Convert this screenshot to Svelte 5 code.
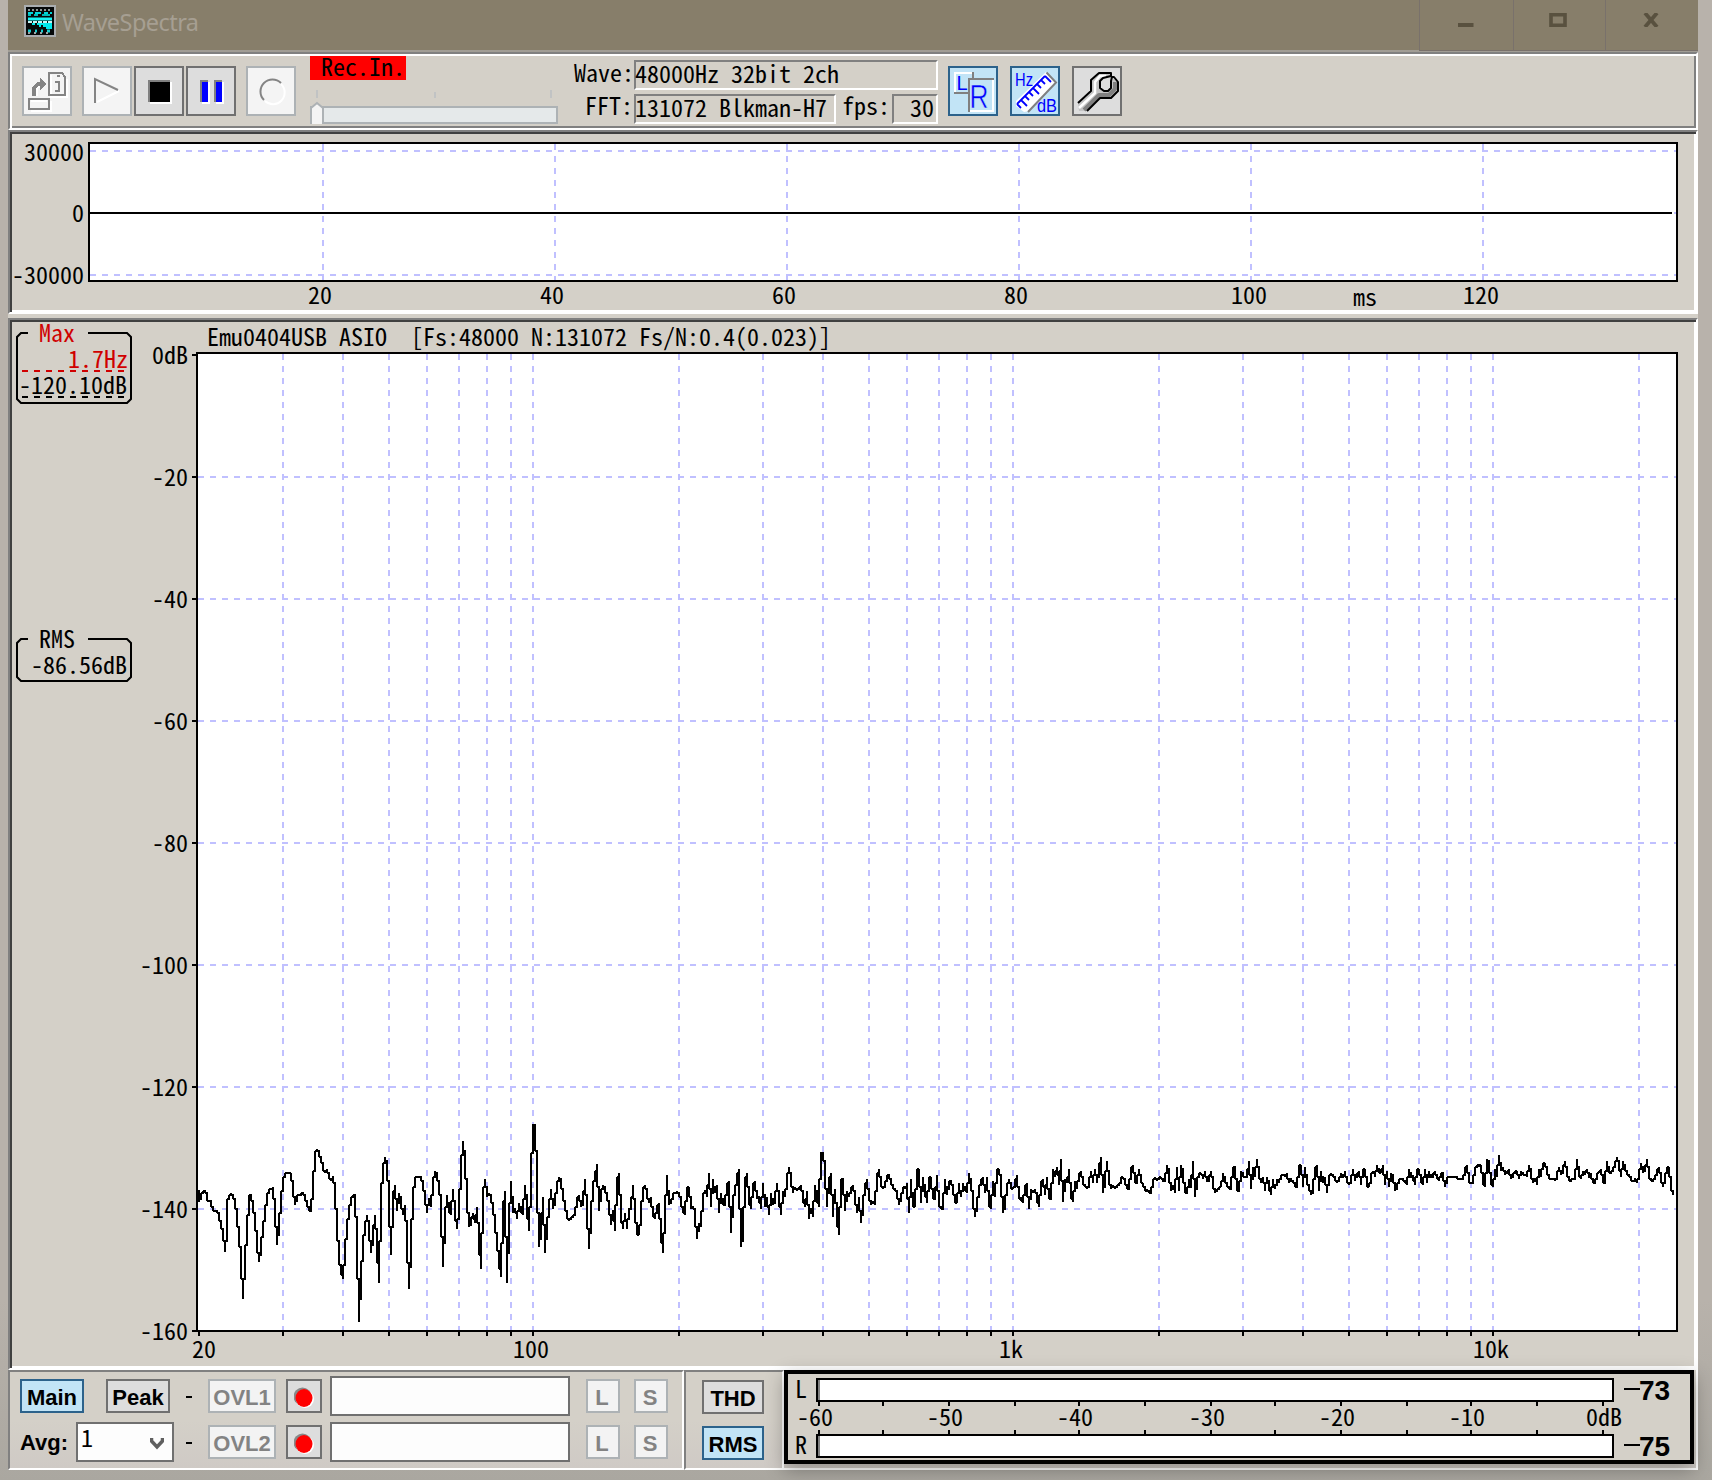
<script>
  const waveMs = [20, 40, 60, 80, 100, 120].map((ms, i) => ({ ms, x: 323 + 232 * i }));

  const decades = [283, 343, 389, 427, 459, 487, 511, 533, 679, 763, 823, 869, 907, 939, 967, 991,
    1013, 1159, 1243, 1303, 1349, 1387, 1419, 1447, 1471, 1493, 1639];
  const levels = ['0dB', '-20', '-40', '-60', '-80', '-100', '-120', '-140', '-160']
    .map((text, i) => ({ text, y: 355 + 122 * i }));
  const freqs = [{ t: '20', x: 192 }, { t: '100', x: 513 }, { t: '1k', x: 999 }, { t: '10k', x: 1473 }];

  // Spectrum trace, in thirds of a pixel; each part has its own horizontal origin.
  const trace = [
    { x: 180, pts: '56,240 56,275 62,258 68,243 76,243 83,257 90,285 98,297 108,303 116,320 122,345 128,372 132,408 135,425 138,355 142,280 148,258 154,248 160,262 166,268 172,320 178,380 184,440 189,568 195,440 201,375 207,256 214,256 220,290 226,330 232,400 237,455 243,410 249,355 255,310 261,262 267,238 279,232 285,300 291,405 297,350 303,265 309,215 315,192 321,188 333,188 339,235 345,285 352,265 360,250 368,250 375,265 381,275 387,302 393,302 399,230 405,135 411,116 417,133 423,145 429,175 435,188 441,178 447,195 453,213 459,197 465,240 471,350 477,440 483,485 489,508 495,420 501,350 507,300 513,265 519,256 525,256 531,380 537,635 543,500 549,410 555,345 561,315 567,350 573,430 579,380 585,315 591,400 597,520 603,260 609,180 615,140 621,160 627,260 633,436 639,260 645,225 651,303 657,250 663,275 669,315 675,285 681,380 687,538 693,400 699,250 705,207 717,200 724,202 730,225 736,265 741,310 747,265 753,290 759,220 765,182 771,195 777,225 783,290 789,472 795,330 801,255 807,300 811,315 819,236 825,310 831,358 837,290 843,180 849,92 855,150 861,265 867,350 873,335 879,310 885,340 891,290 897,390 903,478 909,260 915,207 921,260 927,250 933,265 939,290 945,345 951,395 957,450 963,502 969,300 975,242 981,520 987,340 993,212 999,310 1005,295 1011,328 1017,278 1023,300 1029,315 1035,224 1041,290 1047,364 1053,220 1059,43 1065,43 1071,200 1077,412 1083,360 1089,260 1095,430 1101,340 1107,300 1113,236 1119,298 1125,270 1131,230 1137,200' },
    { x: 550, pts: '27,200 33,213 39,255 45,295 51,315 57,333 63,322 69,315 75,315 81,268 87,256 93,290 99,285 105,206 111,300 117,418 123,320 129,230 135,200 141,163 147,303 153,245 159,225 165,238 171,255 177,290 183,345 189,300 195,364 201,210 207,188 213,320 219,358 225,310 231,358 237,295 243,300 249,225 255,310 261,370 267,376 273,310 279,240 285,225 291,250 297,280 303,262 309,320 315,327 321,293 327,280 333,370 339,430 345,310 351,194 357,286 363,270 370,258 380,243 388,250 393,270 399,308 405,315 411,230 417,230 423,297 429,288 435,310 441,388 447,340 453,350 459,260 465,240 471,262 477,188 483,290 489,207 495,250 501,225 507,310 513,248 519,285 525,285 531,230 537,212 543,370 549,270 555,245 561,200 567,176 573,412 579,370 585,212 591,188 597,272 603,298 609,225 615,213 621,268 627,258 633,298 639,220 645,290 651,262 657,316 663,248 669,285 675,272 681,218 687,265 693,316 699,243 705,262 711,210 717,170 723,210 729,248 735,230 741,243 747,232 753,225 759,262 765,292 771,243 777,328 783,295 789,322 795,225 801,262 807,292 813,127 819,127 825,180 831,290 837,210 843,188 849,322 855,236 861,320 867,376 873,207 879,207 885,303 891,243 897,262 903,240 909,225 915,255 921,310 927,262 933,340 939,290 945,225 951,207 957,265 963,285 969,272 975,285 981,205 987,176 993,225 999,237 1005,230 1011,195 1017,200 1023,215 1029,235 1035,240 1041,250 1047,285 1053,262 1059,230 1065,236 1071,220 1077,310 1083,207 1089,290 1095,292 1101,180 1107,176 1113,280 1119,200 1125,245 1131,280 1137,207' },
    { x: 920, pts: '27,207 33,200 39,268 45,262 51,195 57,285 63,298 69,290 75,207 81,255 87,215 93,213 99,240 105,275 111,280 117,218 123,262 129,220 135,243 141,248 147,188 153,220 159,270 165,322 171,280 177,240 183,210 189,200 195,250 201,200 207,285 213,298 219,213 225,262 231,176 237,176 243,215 249,310 255,280 261,225 267,208 273,232 279,238 285,220 291,195 297,268 303,262 309,280 315,225 321,220 327,298 333,237 339,250 345,237 351,262 357,292 363,213 369,207 375,255 381,200 387,268 393,260 399,176 405,200 411,170 417,225 423,146 429,275 435,207 441,220 447,176 453,262 459,275 465,213 471,238 477,190 483,182 489,225 495,230 501,237 507,220 513,182 519,218 525,176 531,218 537,180 543,140 549,250 555,215 561,152 567,210 573,237 579,225 585,237 591,228 597,225 603,207 609,200 615,213 621,232 627,237 633,180 639,164 645,218 651,218 657,176 663,215 669,218 675,243 681,237 687,249 693,243 699,215 705,202 711,212 717,207 723,200 729,215 735,213 741,164 747,190 753,243 759,225 765,249 771,170 777,243 783,164 789,195 795,243 801,249 807,207 813,235 819,152 825,262 831,210 837,190 843,188 849,207 855,182 861,215 867,213 873,182 879,225 885,249 891,237 897,232 903,232 909,188 915,212 921,225 927,238 933,237 939,170 945,176 951,243 957,238 963,182 969,200 975,200 981,198 987,152 993,238 999,170 1005,200 1011,146 1017,195 1023,220 1029,200 1035,243 1041,200 1047,225 1053,256 1059,207 1065,237 1071,207 1077,218 1083,195 1095,200 1101,188 1107,220 1113,205 1119,215 1125,228 1131,230 1137,170 1143,164 1149,230 1155,170 1161,220 1167,235 1173,256 1179,237 1185,180 1191,164' },
    { x: 1310, pts: '21,164 27,243 33,182 39,218 45,200 51,249 57,205 63,188 69,202 75,202 81,218 87,207 93,190 99,205 105,182 111,215 117,225 123,210 129,176 135,212 141,190 147,182 153,225 159,182 165,176 171,225 177,232 183,200 189,182 195,200 201,164 207,185 213,190 219,164 225,225 231,182 237,232 243,188 249,200 255,243 261,232 267,207 279,207 285,218 291,225 297,176 303,205 309,195 315,225 321,182 327,176 333,218 339,225 345,176 351,218 357,182 363,205 369,200 375,182 381,205 387,213 393,190 399,190 405,232 411,200 420,200 440,202 446,207 458,202 465,182 471,164 477,215 489,218 495,176 501,165 507,170 513,164 519,215 525,232 531,146 537,165 543,215 549,232 555,176 561,200 567,134 573,182 579,170 585,195 591,188 597,178 603,207 609,190 615,182 621,182 627,207 633,182 639,190 645,195 651,200 657,164 663,190 669,218 675,205 681,225 687,176 693,200 699,158 705,158 711,182 717,205 729,205 735,213 741,195 747,170 753,195 759,182 765,152 771,185 777,213 783,207 795,207 801,146 807,195 813,207 819,182 825,195 831,176 837,205 843,190 849,218 855,218 861,190 867,190 873,176 879,218 885,218 891,152 897,190 903,182 909,180 915,165 921,140 927,170 933,200 939,152 945,175 951,185 957,200 963,207 969,215 975,205 981,218 987,195 993,158 999,188 1005,182 1011,146 1017,200 1023,213 1029,207 1035,205 1041,185 1047,170 1053,207 1059,232 1065,205 1071,176 1077,170 1083,235 1089,256' }
  ];

  const snap = (v) => 2 * Math.floor(v / 2) + 1;
  // Joins neighbouring columns half-way up, as an unsmoothed line does.
  function stepPath(part) {
    const pts = part.pts.split(' ').map((p) => {
      const [x, y] = p.split(',').map(Number);
      return [snap(part.x + x / 3), 1110 + y / 3];
    });
    let d = `M${pts[0][0]} ${pts[0][1].toFixed(1)}`;
    for (let i = 1; i < pts.length; i++) {
      const [x, y] = pts[i];
      d += `V${snap((pts[i - 1][1] + y) / 2)}H${x}V${y.toFixed(1)}`;
    }
    return d;
  }

  const meterTicks = [819, 883, 949, 1015, 1079, 1145, 1211, 1275, 1341, 1407, 1471, 1537, 1603];
  const meterLabels = [['-60', 797], ['-50', 927], ['-40', 1057], ['-30', 1189], ['-20', 1319], ['-10', 1449], ['0dB', 1586]];
  const overlays = [{ name: 'OVL1' }, { name: 'OVL2' }];
</script>

<div class="desktop">
  <div class="window">
    <header class="title">
      <svg class="appicon" viewBox="0 0 32 32" width="32" height="32">
        <rect width="32" height="32" fill="#a9adb0" />
        <rect x="2" y="2" width="28" height="28" fill="#06090a" />
        <path d="M4 5h24" stroke="#8a9696" stroke-width="2" stroke-dasharray="2 2" />
        <path d="M4 8h5m2 0h6m3 0h4m2 0h2" stroke="#00d8dc" stroke-width="2" />
        <path d="M4 10h3m3 0h4m4 0h8" stroke="#0bb" stroke-width="2" />
        <path d="M4 14h24" stroke="#19f2f4" stroke-width="3" />
        <path d="M4 17h24" stroke="#c9f4f4" stroke-width="2" stroke-dasharray="4 1" />
        <path d="M8 19h3m2 0h15" stroke="#00e8ec" stroke-width="2" />
        <path d="M15 21h2m2 0h9M22 23h6" stroke="#00e8ec" stroke-width="2" />
        <path d="M4 26h3m4 0h2m4 0h2m4 0h3" stroke="#16cdd0" stroke-width="3" />
        <path d="M4 28h24" stroke="#98a6a6" stroke-width="2" stroke-dasharray="2 4" />
      </svg>
      <span class="caption">WaveSpectra</span>
      <div class="winbtn first"><svg viewBox="0 0 16 14" width="16" height="14"><rect y="10" width="15.5" height="4" fill="#59513f" /></svg></div>
      <div class="winbtn mid"><svg viewBox="0 0 18 14" width="18" height="14"><rect x="2" y="1.7" width="14" height="10.6" fill="none" stroke="#59513f" stroke-width="3.6" /></svg></div>
      <div class="winbtn last"><svg viewBox="0 0 16 14" width="16" height="14"><path d="M2 0L14 14M14 0L2 14" stroke="#59513f" stroke-width="3.8" /></svg></div>
    </header>

    <section class="toolbar">
      <button class="tool off" aria-label="Open">
        <svg viewBox="22 66 50 50" width="50" height="50" fill="none" stroke-width="2" shape-rendering="crispEdges">
          <path d="M51 75V97H67V79M31 101H47M31 111H51V101M37 96V88L43 84" stroke="#fff" />
          <path d="M49 73H62L65 77V95H49ZM29 99H49V109H29Z" stroke="#848484" />
          <path d="M34 96V88L38 84H42" stroke="#848484" stroke-width="4" />
          <path d="M40 78L47 84L40 90Z" fill="#848484" />
          <path d="M57 76h3M55 82h4v8M55 91h5" stroke="#848484" />
        </svg>
      </button>
      <button class="tool off g10" aria-label="Play">
        <svg viewBox="82 66 50 50" width="50" height="50" fill="none" stroke-width="2">
          <path d="M97 102L119 91" stroke="#fff" /><path d="M95 103V79L118 90" stroke="#848484" />
        </svg>
      </button>
      <button class="tool g2" aria-label="Stop">
        <svg viewBox="134 66 50 50" width="50" height="50">
          <rect x="148" y="80" width="22" height="22" fill="#808080" /><rect x="150" y="82" width="22" height="22" fill="#fff" /><rect x="150" y="82" width="20" height="20" />
        </svg>
      </button>
      <button class="tool g2" aria-label="Pause">
        <svg viewBox="186 66 50 50" width="50" height="50">
          {#each [200, 214] as x}
            <rect {x} y="80" width="8" height="22" fill="#808080" /><rect x={x + 2} y="82" width="8" height="22" fill="#fff" /><rect x={x + 2} y="82" width="6" height="20" fill="#00f" />
          {/each}
        </svg>
      </button>
      <button class="tool off g10" aria-label="Record">
        <svg viewBox="246 66 50 50" width="50" height="50" fill="none" stroke-width="2">
          <path d="M281 84A11.500 11.500 0 0 1 265 101" stroke="#fff" /><path d="M281 83A11.500 11.500 0 1 0 264 100" stroke="#848484" />
        </svg>
      </button>

      <div class="position">
        <div class="rec mono">&nbsp;Rec.In.</div>
        <svg viewBox="310 80 250 46" width="250" height="46">
          <path d="M317 90v8M435 92v6M551 90v8" stroke="#c1c3c4" stroke-width="2" />
          <rect x="311" y="107" width="246" height="16" fill="#e5e9ea" stroke="#adb2b5" stroke-width="2" />
          <path d="M311 124V108L317 103L323 108V124" fill="#f4f4f4" stroke="#adb2b5" stroke-width="2" />
        </svg>
      </div>

      <div class="info">
        <div class="row r1"><span class="mono lbl">Wave:</span><span class="mono field wide">48000Hz 32bit 2ch</span></div>
        <div class="row r2"><span class="mono lbl">FFT:</span><span class="mono field fft">131072 Blkman-H7</span><span class="mono fps">fps:</span><span class="mono field num">30</span></div>
      </div>

      <button class="tool on g10" aria-label="Channels">
        <svg viewBox="948 66 50 50" width="50" height="50" fill="none" stroke-width="2">
          <path d="M955 93V73H973" stroke="#fff" /><path d="M954 93H969M973 72V79" stroke="#808080" />
          <path d="M969 112V79H994" stroke="#808080" /><path d="M970 111H993V80" stroke="#fff" />
          <text class="ico" x="956.500" y="90" font-size="20">L</text>
          <text class="ico thin" x="969.500" y="108" font-size="34" textLength="19" lengthAdjust="spacingAndGlyphs">R</text>
        </svg>
      </button>
      <button class="tool on g12" aria-label="Scale">
        <svg viewBox="1010 66 50 50" width="50" height="50" fill="none">
          <path d="M1046 72L1056 82L1029 111L1024 112L1016 106V101Z" fill="#fff" />
          <path d="M1046.500 72.500L1056 82.500L1028 112" stroke="#808080" stroke-width="2" />
          <path d="M1017 104L1045 76M1045 76l6 6M1041 80l4 4M1037 84l4 4M1033 88l6 6M1029 92l4 4M1025 96l4 4M1021 100l6 6M1017 104l4 4" stroke="#00f" stroke-width="1.800" />
          <text class="ico" x="1015" y="86" font-size="18.500" textLength="18" lengthAdjust="spacingAndGlyphs">Hz</text>
          <text class="ico" x="1037" y="112" font-size="18.500" textLength="20" lengthAdjust="spacingAndGlyphs">dB</text>
        </svg>
      </button>
      <button class="tool g12" aria-label="Settings">
        <svg viewBox="1072 66 50 50" width="50" height="50" fill="none" stroke-linejoin="round">
          <path fill-rule="evenodd" d="M1078 104L1092 92V80L1099 73H1111V76L1103 78L1101 81V88L1104 91H1108L1111 88V82L1114 78L1118 82V91L1111 98H1100L1087 111H1079Z" fill="#c4c4c4" />
          <path d="M1084 110L1099 95H1109L1115 89V82" stroke="#808080" stroke-width="4" />
          <path d="M1079 108L1095 93V82L1100 76H1106" stroke="#fff" stroke-width="2.500" />
          <path d="M1078 103L1091 91V80L1099 73H1111V76L1103 78L1100 81V88L1104 91H1108L1111 88V81L1112 77L1114 77L1118 82V91L1111 98H1100L1087 111" stroke="#000" stroke-width="2" />
        </svg>
      </button>
    </section>

    <section class="sunken wave">
      <svg viewBox="12 134 1682 176" width="1682" height="176">
        <rect x="89" y="143" width="1588" height="138" fill="#fff" stroke="#000" stroke-width="2" />
        <g class="grid">
          <path d="M90 151H1676M90 275H1676" />
          <path d="M1674 213h2" />
          {#each waveMs as w}<path d="M{w.x} 144V280" />{/each}
        </g>
        <path d="M90 213H1672" stroke="#000" stroke-width="2" />
        <g class="mono">
          <text x="84" y="161" text-anchor="end">30000</text>
          <text x="84" y="222" text-anchor="end">0</text>
          <text x="84" y="284" text-anchor="end">-30000</text>
          {#each waveMs as w}<text x={w.x - (w.ms < 100 ? 15 : 20)} y="304">{w.ms}</text>{/each}
          <text x="1353" y="306">ms</text>
        </g>
      </svg>
    </section>

    <section class="sunken spectrum">
      <svg viewBox="12 322 1682 1044" width="1682" height="1044">
        <rect x="197" y="353" width="1480" height="978" fill="#fff" stroke="#000" stroke-width="2" />
        <g class="grid">
          {#each decades as x}<path d="M{x} 354V1330" />{/each}
          {#each levels.slice(1, 8) as l}<path d="M198 {l.y}H1676" />{/each}
        </g>
        <g stroke="#000" stroke-width="2">
          <path d="M199 1330V1336" />
          {#each decades as x}<path d="M{x} 1330V1336" />{/each}
          {#each levels as l}<path d="M192 {l.y}H198" />{/each}
        </g>
        {#each trace as part}
          <path d={stepPath(part)} fill="none" stroke="#000" stroke-width="2" stroke-linejoin="bevel" shape-rendering="crispEdges" />
        {/each}
        <g class="mono">
          <text x="207" y="346" xml:space="preserve">Emu0404USB ASIO  [Fs:48000 N:131072 Fs/N:0.4(0.023)]</text>
          {#each levels as l}<text x="188" y={l.y + 9} text-anchor="end">{l.text}</text>{/each}
          {#each freqs as f}<text x={f.x} y="1358">{f.t}</text>{/each}
        </g>
        <g fill="none" stroke="#000" stroke-width="2">
          <path d="M28 333H21L17 337V399L21 403H127L131 399V337L127 333H88" />
          <path d="M28 639H21L17 643V677L21 681H127L131 677V643L127 639H88" />
          <path d="M22 397H126" stroke-dasharray="6 6" />
          <path d="M22 371H126" stroke="#d00000" stroke-dasharray="6 6" />
        </g>
        <g class="mono">
          <text class="red" x="39" y="342">Max</text>
          <text class="red" x="128" y="368" text-anchor="end">1.7Hz</text>
          <text x="127" y="394" text-anchor="end">-120.10dB</text>
          <text x="39" y="648">RMS</text>
          <text x="127" y="674" text-anchor="end">-86.56dB</text>
        </g>
      </svg>
    </section>

    <footer class="bottom">
      <div class="pane controls">
        <div class="crow">
          <div class="lead"><button class="btn on">Main</button><button class="btn peak">Peak</button></div>
          {@render overlay(overlays[0])}
        </div>
        <div class="crow">
          <div class="lead"><span class="avg">Avg:</span>
            <div class="select"><span class="mono">1</span><svg viewBox="0 0 14 13" width="14" height="13"><path d="M1.500 1V4L7 10L12.500 4V1" fill="none" stroke="#606060" stroke-width="3.500" /></svg></div>
          </div>
          {@render overlay(overlays[1])}
        </div>
      </div>
      <div class="pane modes">
        <button class="btn">THD</button>
        <button class="btn on">RMS</button>
      </div>
      <div class="pane holder">
        <div class="meter">
          <svg viewBox="788 1374 902 86" width="902" height="86">
            {#each [1379, 1435] as y}
              <rect x="817" {y} width="796" height="22" fill="#fff" stroke="#000" stroke-width="2" />
              <rect x="818" y={y + 1} width="2" height="20" fill="#808080" />
            {/each}
            {#each meterTicks as x}<path d="M{x} 1402v4M{x} 1430v4" stroke="#000" stroke-width="2" />{/each}
            <g class="mono">
              <text x="795" y="1398">L</text><text x="795" y="1454">R</text>
              {#each meterLabels as [t, x]}<text {x} y="1426">{t}</text>{/each}
            </g>
            <g class="value">
              <path d="M1624 1389h16M1624 1445h16" stroke="#000" stroke-width="2" />
              <text x="1639" y="1400">73</text><text x="1639" y="1456">75</text>
            </g>
          </svg>
        </div>
      </div>
    </footer>
  </div>
</div>

{#snippet overlay(o)}
  <span class="dash"></span>
  <button class="btn off ovl">{o.name}</button>
  <button class="btn dot" aria-label="Colour">
    <svg viewBox="0 0 20 22" width="20" height="22"><circle cx="8.500" cy="9.500" r="9" fill="#888" /><circle cx="11" cy="12" r="9" fill="#fff" /><ellipse cx="10" cy="11" rx="8.500" ry="9" fill="#f00" /></svg>
  </button>
  <div class="input"></div>
  <button class="btn off sq ls">L</button>
  <button class="btn off sq ss">S</button>
{/snippet}

<style>
  :global(body) { margin: 0; background: #b8b2ab; }
  * { box-sizing: border-box; }
  svg { display: block; }
  .desktop { width: 1712px; height: 1480px; padding: 0 14px 10px 8px; overflow: hidden; background: linear-gradient(#b8b2ab 0 1300px, #aaa7a0 1480px); }
  .window { width: 1690px; height: 1470px; display: flex; flex-direction: column; background: #d4d0c8; }
  .mono { font-family: "Noto Sans CJK JP", "Liberation Mono", monospace; font-size: 24px; font-feature-settings: "hwid" 1; line-height: 24px; white-space: pre; fill: #000; color: #000; }
  .red { fill: #d00000; }
  .grid path { stroke: #c0c0ff; stroke-width: 2; stroke-dasharray: 6 6; fill: none; }

  .title { height: 52px; display: flex; background: #877e6a; border-bottom: 2px solid #a19d95; }
  .appicon { margin: 5px 0 0 16px; }
  .caption { flex: 1; margin-left: 6px; font: 23.500px/45px "Noto Sans", sans-serif; letter-spacing: -0.55px; color: #a69f92; }
  .winbtn { height: 51px; border-left: 1px solid #79716b; border-bottom: 1px solid #79716b; padding-top: 13px; }
  .winbtn.first { width: 94px; padding-left: 38px; }
  .winbtn.mid { width: 92px; padding-left: 35px; }
  .winbtn.last { width: 93px; padding-left: 37px; }

  .toolbar { height: 78px; display: flex; align-items: flex-start; border: 2px solid #808080; border-right-color: #fff; border-bottom-color: #fff; padding: 0 0 0 10px; box-shadow: inset 2px 2px #fff, inset -2px -2px #808080; width: 1690px; }
  .tool { width: 50px; height: 50px; padding: 0; margin: 12px 0 0; flex: none; border: 0; background: #ddd; box-shadow: inset 0 0 0 2px #707070; }
  .tool:first-child { margin-left: 2px; }
  .tool.off { background: #f4f4f4; box-shadow: inset 0 0 0 2px #adb2b5; }
  .tool.on { background: #c2e4f6; box-shadow: inset 0 0 0 2px #2c628b; }
  .tool.g10 { margin-left: 10px; }
  .tool.g12 { margin-left: 12px; }
  .tool.g2 { margin-left: 2px; }
  .ico { font-family: "Liberation Sans", sans-serif; fill: #00f; }
  .ico.thin { stroke: #c2e4f6; stroke-width: 0.6px; }
  .position { width: 250px; margin: 2px 0 0 14px; }
  .rec { width: 96px; height: 24px; background: #f00; line-height: 20px; text-indent: -1px; }
  .info { width: 364px; margin: 6px 0 0 14px; }
  .row { display: flex; height: 30px; }
  .r2 { margin-top: 4px; }
  .lbl { width: 60px; text-align: right; padding-right: 1px; }
  .field { height: 30px; border: 2px solid #808080; border-right-color: #fff; border-bottom-color: #fff; line-height: 21px; text-indent: -1px; }
  .row .lbl, .row .fps { line-height: 24px; }
  .r2 .field { line-height: 22px; }
  .r2 .lbl, .r2 .fps { line-height: 22px; }
  .wide { width: 304px; }
  .fft { width: 202px; }
  .fps { width: 50px; margin: 0 0 0 6px; }
  .num { width: 46px; text-align: right; padding-right: 2px; }

  .sunken { border-left: 2px solid #808080; border-top: 2px solid #808080; border-right: 2px solid #fff; border-bottom: 2px solid #fff; padding: 2px; box-shadow: inset 2px 2px #404040, inset -2px -2px #fff; }
  .wave { height: 184px; }
  .spectrum { height: 1052px; margin-top: 4px; }

  .bottom { height: 100px; display: flex; }
  .pane { border: 2px solid #808080; border-right-color: #fff; border-bottom-color: #fff; background: linear-gradient(#d4d0c8 50%, #cfcac5); }
  .controls { width: 676px; padding: 4px 0 0 10px; display: flex; flex-direction: column; gap: 6px; }
  .crow { display: flex; align-items: center; height: 40px; }
  .lead { width: 154px; display: flex; align-items: center; }
  .btn { height: 34px; width: 64px; padding: 4px 0 0; border: 2px solid #707070; background: #ddd; font: bold 22px/26px "Liberation Sans", sans-serif; color: #000; text-align: center; flex: none; margin: 0; border-radius: 0; }
  .btn.on { background: #c2e4f6; border-color: #2c628b; }
  .btn.off { background: #f3f3f3; border-color: #adb2b5; color: #838383; }
  .peak { margin-left: 22px; }
  .avg { width: 56px; font: bold 22px/28px "Liberation Sans", sans-serif; padding-top: 1px; }
  .select { width: 98px; height: 40px; border: 2px solid #707070; background: #fdfdfd; display: flex; justify-content: space-between; padding: 1px 8px 0 3px; }
  .select svg { margin-top: 12px; }
  .dash { width: 6px; height: 2px; background: #000; margin: 0 16px 0 12px; position: relative; top: 1px; }
  .ovl { width: 68px; }
  .dot { width: 36px; margin-left: 10px; padding: 3px 0 0 6px; }
  .input { width: 240px; height: 40px; margin-left: 8px; border: 2px solid #707070; background: #fdfdfd; }
  .btn.sq { width: 34px; padding-right: 2px; padding-left: 0; }
  .ls { margin-left: 16px; }
  .ss { margin-left: 14px; }
  .modes { width: 100px; padding: 8px 0 0 16px; display: flex; flex-direction: column; gap: 12px; }
  .modes .btn { width: 62px; }
  .holder { width: 914px; border-top: 0; border-left: 0; }
  .meter { width: 910px; height: 94px; border: 4px solid #000; background: #d4d0c8; box-shadow: 0 6px 18px rgba(0, 0, 0, 0.3); }
  .value text { font: bold 28px "Liberation Sans", sans-serif; }
</style>
